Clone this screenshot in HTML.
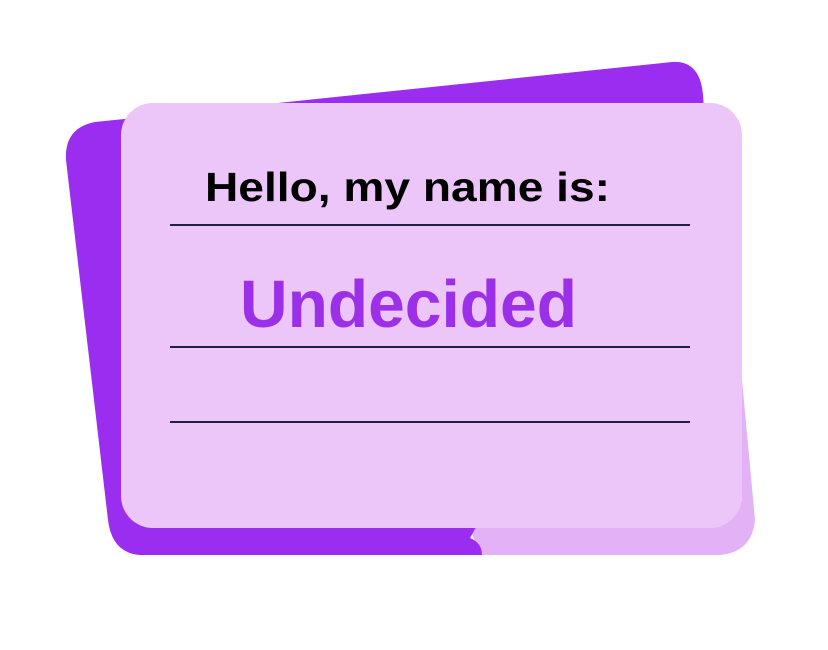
<!DOCTYPE html>
<html><head><meta charset="utf-8"><style>
html,body{margin:0;padding:0;background:#fff;width:828px;height:650px;overflow:hidden}
</style></head><body>
<svg width="828" height="650" viewBox="0 0 828 650" xmlns="http://www.w3.org/2000/svg">
<path d="M480 555 L720 555 Q752 552 755 520 L742 380 L742 500 L470 528 Z" fill="#e2b1f6"/>
<path d="M95 122 L672 62 Q700 60 703 95 L706 140 L706 500 L480 520 L470 538 Q482 543 482 555 L140 555 Q112 553 108 520 L66 160 Q64 128 95 122 Z" fill="#9b2df0"/>
<rect x="121" y="103" width="621" height="425" rx="32" fill="#ecc6f9"/>
<text x="205" y="201" font-family="Liberation Sans, sans-serif" font-weight="bold" font-size="41" fill="#000" textLength="405" lengthAdjust="spacingAndGlyphs">Hello, my name is:</text>
<text x="240" y="327" font-family="Liberation Sans, sans-serif" font-weight="bold" font-size="67" fill="#9b30e8" textLength="337" lengthAdjust="spacingAndGlyphs">Undecided</text>
<g stroke="#1e2140" stroke-width="2">
<line x1="170" y1="225" x2="690" y2="225"/>
<line x1="170" y1="347" x2="690" y2="347"/>
<line x1="170" y1="422" x2="690" y2="422"/>
</g>
</svg>
</body></html>
